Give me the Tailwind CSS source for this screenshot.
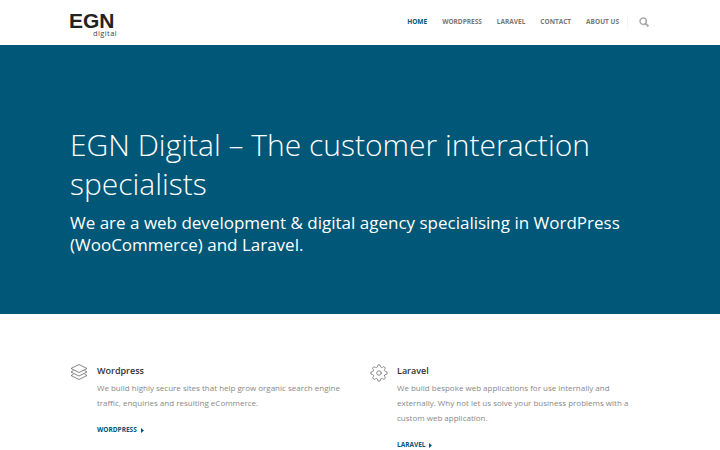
<!DOCTYPE html>
<html lang="en">
<head>
    <meta charset="UTF-8">
    <title>EGN Digital</title>
    <script src="https://cdn.jsdelivr.net/npm/@tailwindcss/browser@4"></script>
</head>
<body class="bg-white font-['Open_Sans',sans-serif] h-[450px] overflow-hidden">
    <!-- header -->
    <header class="h-[45px] bg-white px-[70px] flex items-center justify-between">
        <div class="flex flex-col w-[47px] mt-[4px] ml-[-1px]">
            <span class="font-['Liberation_Sans',sans-serif] font-bold text-[21px] leading-[16px] text-[#222]">EGN</span>
            <span class="text-[7.5px] leading-[8px] text-[#444] text-right tracking-[0.4px] mr-[-1px]">digital</span>
        </div>
        <nav class="flex items-center text-[6.5px] font-bold uppercase text-[#777] mr-[1px] mt-[-1px]">
            <a class="text-[#005778] mr-[15px]">Home</a>
            <a class="mr-[15px]">WordPress</a>
            <a class="mr-[15px]">Laravel</a>
            <a class="mr-[15px]">Contact</a>
            <a class="mr-[8px]">About Us</a>
            <span class="w-px h-[14px] bg-[#f5f5f5] mr-[11px]"></span>
            <svg class="w-[10px] h-[10px]" viewBox="0 0 10 10" fill="none" stroke="#aaa" stroke-width="1.5">
                <circle cx="4.2" cy="4.2" r="3.2"/>
                <path d="M6.6 6.6 9.4 9.4" stroke-width="2"/>
            </svg>
        </nav>
    </header>

    <!-- hero -->
    <section class="h-[269px] bg-[#005778] px-[70px] pt-[81px] text-white">
        <h1 class="text-[30px] leading-[39px] font-light w-[560px] mt-[-1px]">EGN Digital – The customer interaction specialists</h1>
        <p class="text-[17px] leading-[22px] mt-[9px] w-[570px]">We are a web development &amp; digital agency specialising in WordPress (WooCommerce) and Laravel.</p>
    </section>

    <!-- services -->
    <section class="px-[70px] pt-[47px] grid grid-cols-2 gap-x-[20px]">
        <div class="flex w-[280px]">
            <svg class="w-[18px] h-[19px] mt-[2px] mr-[9px] shrink-0" viewBox="0 0 18 18" fill="none" stroke="#666" stroke-width="0.8" stroke-linejoin="round">
                <path d="M9 1 17 5 9 9 1 5Z"/>
                <path d="M3.5 7 1 8.5 9 12.5 17 8.5 14.5 7"/>
                <path d="M3.5 10.5 1 12 9 16 17 12 14.5 10.5"/>
            </svg>
            <div>
                <h3 class="text-[9px] leading-[17px] font-semibold text-[#333] mt-[1px]">Wordpress</h3>
                <p class="text-[8px] leading-[15px] text-[#888] mt-[1px]">We build highly secure sites that help grow organic search engine traffic, enquiries and resulting eCommerce.</p>
                <a class="flex items-center text-[6.5px] font-bold uppercase text-[#005778] mt-[15px] leading-[10px]">WordPress
                    <svg class="w-[3px] h-[5px] ml-[4px]" viewBox="0 0 3 5" fill="#005778"><path d="M0 0 3 2.5 0 5Z"/></svg>
                </a>
            </div>
        </div>
        <div class="flex w-[280px]">
            <svg class="w-[18px] h-[18px] mt-[3px] mr-[9px] shrink-0" viewBox="0 0 24 24" fill="none" stroke="#666" stroke-width="1" stroke-linecap="round" stroke-linejoin="round">
                <circle cx="12" cy="12" r="3"/>
                <path d="M19.4 15a1.65 1.65 0 0 0 .33 1.82l.06.06a2 2 0 1 1-2.83 2.83l-.06-.06a1.65 1.65 0 0 0-2.82 1.17V21a2 2 0 1 1-4 0v-.09a1.65 1.65 0 0 0-2.82-1.17l-.06.06a2 2 0 1 1-2.83-2.83l.06-.06a1.65 1.65 0 0 0-1.17-2.82H3a2 2 0 1 1 0-4h.09a1.65 1.65 0 0 0 1.17-2.82l-.06-.06a2 2 0 1 1 2.83-2.83l.06.06a1.65 1.65 0 0 0 2.82-1.17V3a2 2 0 1 1 4 0v.09a1.65 1.65 0 0 0 2.82 1.17l.06-.06a2 2 0 1 1 2.83 2.83l-.06.06a1.65 1.65 0 0 0 1.17 2.82H21a2 2 0 1 1 0 4h-.09a1.65 1.65 0 0 0-1.51 1z"/>
            </svg>
            <div>
                <h3 class="text-[9px] leading-[17px] font-semibold text-[#333] mt-[1px]">Laravel</h3>
                <p class="text-[8px] leading-[15px] text-[#888] mt-[1px]">We build bespoke web applications for use internally and externally. Why not let us solve your business problems with a custom web application.</p>
                <a class="flex items-center text-[6.5px] font-bold uppercase text-[#005778] mt-[15px] leading-[10px]">Laravel
                    <svg class="w-[3px] h-[5px] ml-[4px]" viewBox="0 0 3 5" fill="#005778"><path d="M0 0 3 2.5 0 5Z"/></svg>
                </a>
            </div>
        </div>
    </section>
</body>
</html>
